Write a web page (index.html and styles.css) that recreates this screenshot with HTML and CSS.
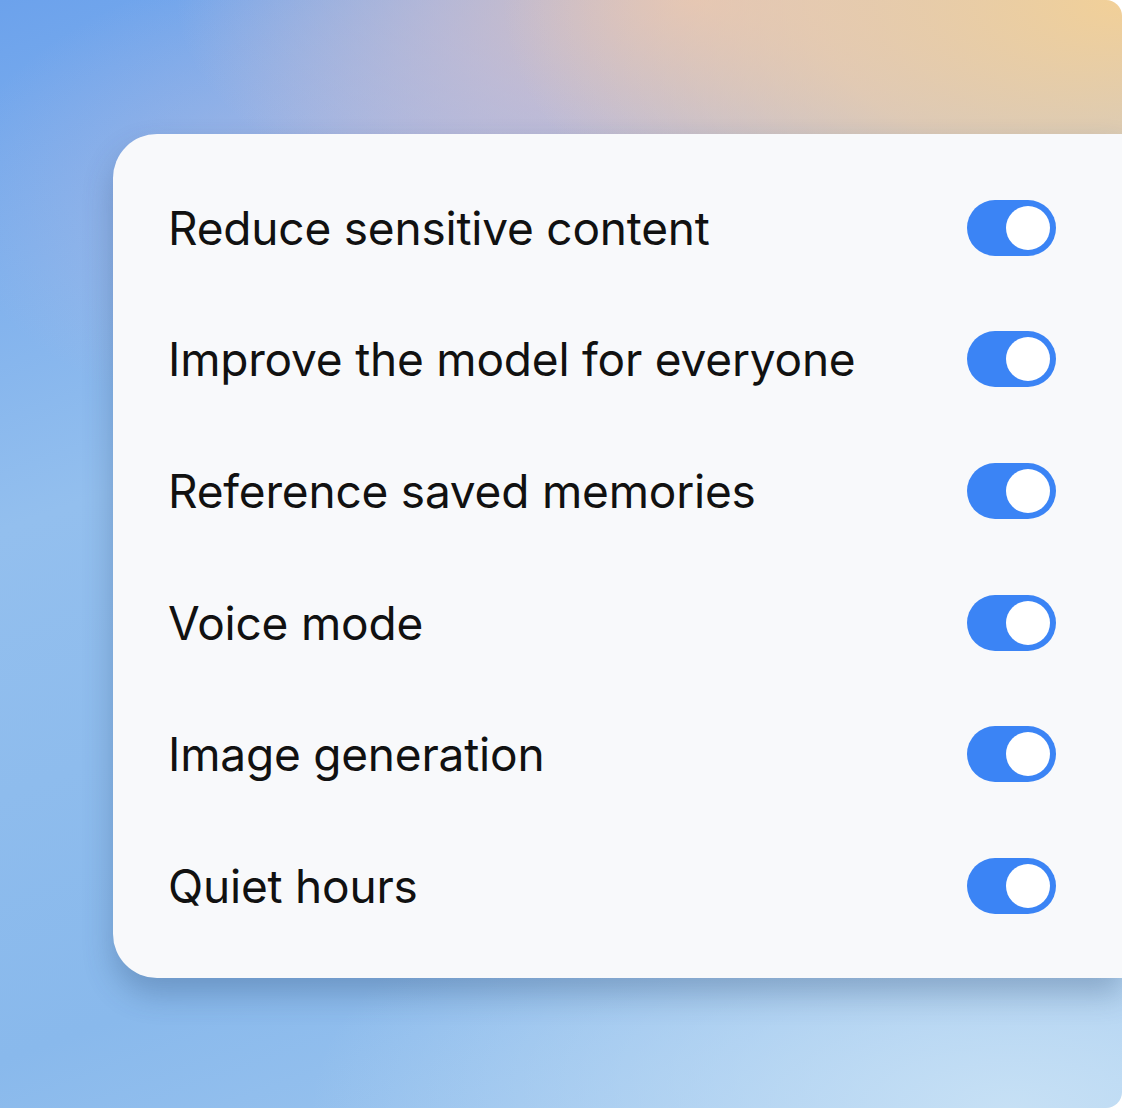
FILE: index.html
```html
<!DOCTYPE html>
<html lang="en">
<head>
<meta charset="utf-8">
<title>Settings</title>
<link rel="stylesheet" href="styles.css">
</head>
<body>
<div class="frame">
  <div class="card">
    <div class="row"><span class="label">Reduce sensitive content</span><span class="toggle"><span class="knob"></span></span></div>
    <div class="row"><span class="label">Improve the model for everyone</span><span class="toggle"><span class="knob"></span></span></div>
    <div class="row"><span class="label">Reference saved memories</span><span class="toggle"><span class="knob"></span></span></div>
    <div class="row"><span class="label">Voice mode</span><span class="toggle"><span class="knob"></span></span></div>
    <div class="row"><span class="label">Image generation</span><span class="toggle"><span class="knob"></span></span></div>
    <div class="row"><span class="label">Quiet hours</span><span class="toggle"><span class="knob"></span></span></div>
  </div>
</div>
</body>
</html>
```
FILE: styles.css
```css
html, body {
  margin: 0;
  padding: 0;
  background: #ffffff;
}

.frame {
  width: 1122px;
  height: 1108px;
  box-sizing: border-box;
  padding: 134px 0 0 113px;
  border-radius: 0 16px 16px 0;
  overflow: hidden;
  background:
    radial-gradient(ellipse 620px 330px at 100% 0%, rgba(242, 208, 152, 1) 0%, rgba(238, 206, 168, 0.75) 50%, rgba(236, 206, 176, 0) 100%),
    radial-gradient(ellipse 520px 250px at 62% 0%, rgba(228, 194, 186, 0.95) 0%, rgba(220, 192, 200, 0.55) 50%, rgba(210, 190, 215, 0) 100%),
    radial-gradient(ellipse 500px 260px at 40% 18%, rgba(196, 186, 218, 0.7) 0%, rgba(196, 186, 218, 0) 100%),
    radial-gradient(ellipse 700px 300px at 90% 100%, rgba(198, 224, 245, 1) 0%, rgba(198, 224, 245, 0) 100%),
    linear-gradient(160deg, #6ca2ec 0%, #93bfee 35%, #89b9ec 70%, #a6cbf0 100%);
  font-family: Inter, "Noto Sans", "Liberation Sans", sans-serif;
}

.card {
  width: 1009px;
  box-sizing: border-box;
  padding: 28px 66px 26px 55px;
  background: #f8f9fb;
  border-radius: 44px 0 0 44px;
  box-shadow: 0 16px 30px rgba(40, 70, 110, 0.3);
}

.row {
  height: 131.6px;
  display: flex;
  align-items: center;
  justify-content: space-between;
}

.label {
  font-size: 46px;
  font-weight: 400;
  letter-spacing: -0.2px;
  color: #111111;
}

.toggle {
  width: 89px;
  height: 56px;
  border-radius: 28px;
  background: #3b84f5;
  display: flex;
  align-items: center;
  justify-content: flex-end;
  padding-right: 6px;
  box-sizing: border-box;
}

.knob {
  width: 44px;
  height: 44px;
  border-radius: 50%;
  background: #ffffff;
}
```
